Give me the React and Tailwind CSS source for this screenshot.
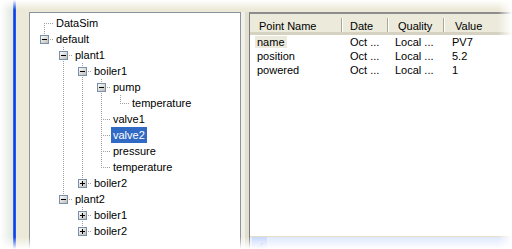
import React from "react";

const tree = [
  { label: "DataSim", guides: [], first: true, last: false },
  { label: "default", guides: [], last: true, box: "minus" },
  { label: "plant1", guides: [false], last: false, box: "minus" },
  { label: "boiler1", guides: [false, true], last: false, box: "minus" },
  { label: "pump", guides: [false, true, true], last: false, box: "minus" },
  { label: "temperature", guides: [false, true, true, true], last: true },
  { label: "valve1", guides: [false, true, true], last: false },
  { label: "valve2", guides: [false, true, true], last: false, selected: true },
  { label: "pressure", guides: [false, true, true], last: false },
  { label: "temperature", guides: [false, true, true], last: true },
  { label: "boiler2", guides: [false, true], last: true, box: "plus" },
  { label: "plant2", guides: [false], last: true, box: "minus" },
  { label: "boiler1", guides: [false, false], last: false, box: "plus" },
  { label: "boiler2", guides: [false, false], last: true, box: "plus" },
];

const points = [
  { name: "name", date: "Oct ...", quality: "Local ...", value: "PV7", focus: true },
  { name: "position", date: "Oct ...", quality: "Local ...", value: "5.2" },
  { name: "powered", date: "Oct ...", quality: "Local ...", value: "1" },
];

const DOT = "#a0a0a0";

// dotted vertical run, every other pixel
const vDots = (from, to) => {
  const out = [];
  for (let y = from; y < to; y++) {
    if (y % 2 === 0) out.push(<rect key={"v" + y} x={9} y={y} width={1} height={1} fill={DOT} />);
  }
  return out;
};

const hDots = (from, to) => {
  const out = [];
  for (let x = from; x < to; x++) {
    if (x % 2 === 1) out.push(<rect key={"h" + x} x={x} y={8} width={1} height={1} fill={DOT} />);
  }
  return out;
};

const GuideCell = ({ on }) => (
  <svg width="19" height="16" className="shrink-0">
    {on && vDots(0, 16)}
  </svg>
);

const OwnCell = ({ first, last, box }) => (
  <svg width="19" height="16" className="shrink-0">
    <defs>
      <linearGradient id="boxfill" x1="0" y1="0" x2="1" y2="1">
        <stop offset="0" stopColor="#ffffff" />
        <stop offset="1" stopColor="#bdbab0" />
      </linearGradient>
    </defs>
    {vDots(first ? 8 : 0, last ? 9 : 16)}
    {hDots(box ? 14 : 10, 19)}
    {box && (
      <g>
        <rect x={5.5} y={4.5} width={8} height={8} fill="url(#boxfill)" stroke="#7890ad" />
        <rect x={7} y={8} width={5} height={1} fill="#000" />
        {box === "plus" && <rect x={9} y={6} width={1} height={5} fill="#000" />}
      </g>
    )}
  </svg>
);

const TreeRow = ({ item }) => (
  <div className="flex h-[16px] items-center">
    {item.guides.map((g, i) => (
      <GuideCell key={i} on={g} />
    ))}
    <OwnCell first={item.first} last={item.last} box={item.box} />
    <span
      className={`h-[16px] px-[2px] leading-[16px] whitespace-nowrap ${
        item.selected ? "bg-[#316ac5] text-white" : ""
      }`}
    >
      {item.label}
    </span>
  </div>
);

const HeaderCell = ({ label, width, pad, divider = true }) => (
  <div className={`relative h-full shrink-0 ${width}`}>
    <span className={`block pt-[4px] leading-[16px] ${pad}`}>{label}</span>
    {divider && (
      <div className="absolute right-0 top-[4px] flex h-[14px]">
        <div className="w-px bg-[#aca899]" />
        <div className="w-px bg-white" />
      </div>
    )}
  </div>
);

export default function App() {
  return (
    <div className="relative flex h-[249px] w-[512px] overflow-hidden bg-[#ece9d8] font-['Liberation_Sans',Arial,sans-serif] text-[11px] text-black">
      {/* desktop edge + window border */}
      <div className="w-[13px] shrink-0 bg-gradient-to-r from-white to-[#e1e9df]" />
      <div className="w-[3px] shrink-0 bg-gradient-to-r from-[#4a78f0] via-[#0a3ee6] to-[#3566ee]" />
      <div className="w-[13px] shrink-0" />

      {/* tree */}
      <div className="mt-[12px] w-[212px] shrink-0 border-x border-t border-[#8b949e] bg-white pl-[5px] pt-[2px]">
        {tree.map((item, i) => (
          <TreeRow key={i} item={item} />
        ))}
      </div>

      {/* splitter */}
      <div className="mt-[12px] flex w-[8px] shrink-0">
        <div className="w-[4px] bg-[#f1efe6]" />
        <div className="w-[4px] bg-[#e2dfd2]" />
      </div>

      {/* point list */}
      <div className="mt-[12px] flex min-w-0 flex-1 flex-col border-l border-t-2 border-l-[#7d7d7d] border-t-[#8c8c8c] bg-white">
        <div className="flex h-[21px] shrink-0 border-b-[3px] border-[#d6d2c2] bg-[#ebeadb]">
          <HeaderCell label="Point Name" width="w-[93px]" pad="pl-[9px]" />
          <HeaderCell label="Date" width="w-[46px]" pad="pl-[7px]" />
          <HeaderCell label="Quality" width="w-[56px]" pad="pl-[9px]" />
          <HeaderCell label="Value" width="flex-1" pad="pl-[10px]" divider={false} />
        </div>
        <div className="h-[201px] shrink-0">
          {points.map((p, i) => (
            <div key={i} className="flex h-[14px] leading-[14px]">
              <div className="w-[93px] shrink-0 pl-[5px]">
                <span className={`px-[2px] ${p.focus ? "bg-[#eceadd]" : ""}`}>{p.name}</span>
              </div>
              <div className="w-[46px] shrink-0 pl-[7px]">{p.date}</div>
              <div className="w-[56px] shrink-0 pl-[6px]">{p.quality}</div>
              <div className="flex-1 pl-[7px]">{p.value}</div>
            </div>
          ))}
        </div>
        <div className="h-px shrink-0 bg-[#e6dfc8]" />
        <div className="flex h-[17px] shrink-0 bg-[#e4ebfd]">
          <div className="ml-[2px] flex w-[15px] items-center justify-center bg-[#c9d8fc]">
            <svg width="8" height="8" viewBox="0 0 8 8">
              <path d="M1 7 L7 1 M4 7 L7 4" stroke="#8ba3d6" strokeWidth="1" fill="none" />
            </svg>
          </div>
          <div className="ml-[2px] flex-1 bg-[#dfe8fd]" />
        </div>
      </div>

      {/* soft edges of the cropped shot */}
      <div className="pointer-events-none absolute inset-x-0 top-0 h-[10px] bg-gradient-to-b from-white to-transparent" />
      <div className="pointer-events-none absolute bottom-0 right-0 top-0 w-[14px] bg-gradient-to-r from-transparent to-white" />
      <div className="pointer-events-none absolute inset-x-0 bottom-0 h-[12px] bg-gradient-to-b from-transparent to-white" />
    </div>
  );
}
